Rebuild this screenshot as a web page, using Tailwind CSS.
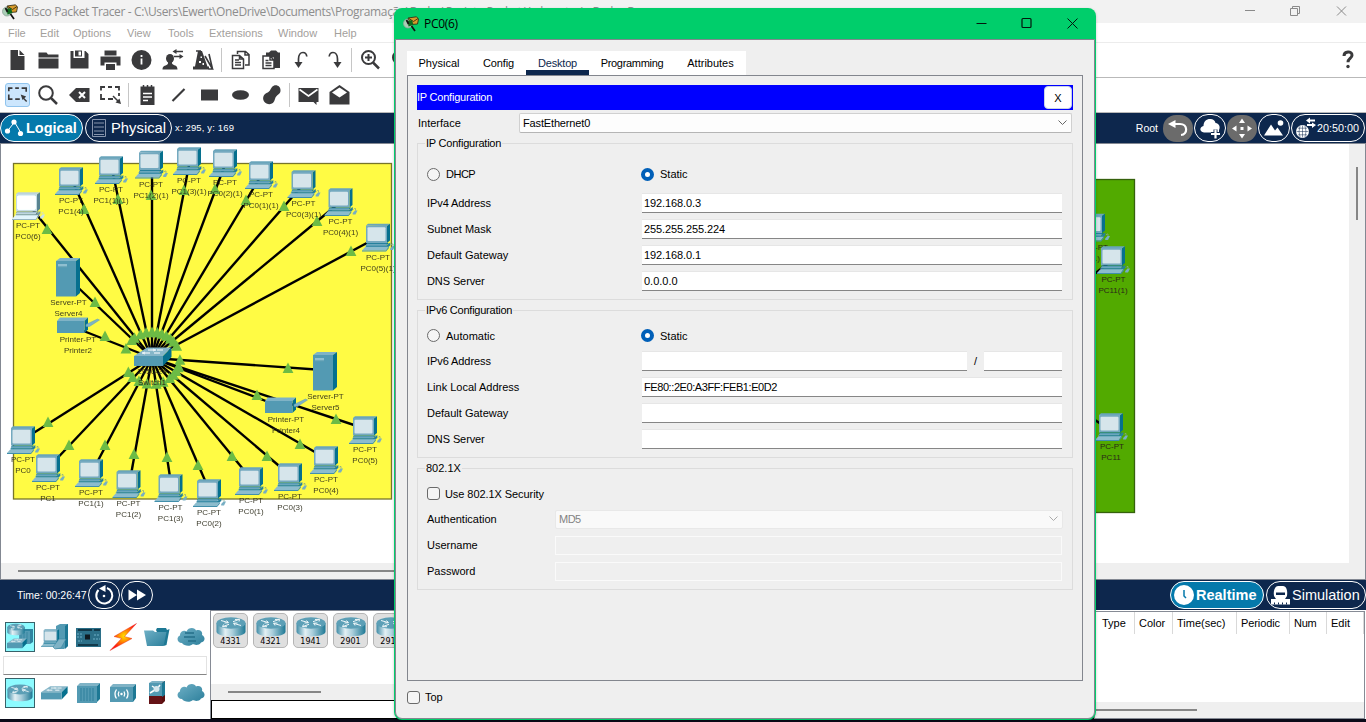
<!DOCTYPE html>
<html lang="en">
<head>
<meta charset="utf-8">
<title>Cisco Packet Tracer</title>
<script src="https://cdn.jsdelivr.net/npm/@tailwindcss/browser@4"></script>
</head>
<body class="w-[1366px] h-[722px] overflow-hidden bg-white font-['Liberation_Sans',sans-serif] text-[11px] leading-[14px] text-black">

<!-- Shared symbols -->
<svg width="0" height="0" class="absolute">
  <defs>
    <linearGradient id="gBody" x1="0" x2="1"><stop offset="0" stop-color="#3f8ca7"/><stop offset=".3" stop-color="#e3f0f4"/><stop offset=".55" stop-color="#a9cedb"/><stop offset="1" stop-color="#1d7894"/></linearGradient>
    <linearGradient id="gBlue" x1="0" x2="1" y1="0" y2="1"><stop offset="0" stop-color="#6fb0c6"/><stop offset="1" stop-color="#2c7f9b"/></linearGradient>
    <radialGradient id="gBolt" gradientUnits="userSpaceOnUse" cx="16" cy="14" r="13"><stop offset="0" stop-color="#ffe000"/><stop offset=".45" stop-color="#ff8a00"/><stop offset="1" stop-color="#ff1a10"/></radialGradient>
    <symbol id="pc" viewBox="0 0 34 28" overflow="visible">
      <path d="M4 2 6 .3H28L25 2.5Z" fill="#6aa5bb"/>
      <path d="M25 2.5 28 .3V17l-3 2.5Z" fill="#06708e"/>
      <path d="M4 2H25V19.5H4Z" fill="#74a9bf"/>
      <rect x="5.5" y="3.7" width="18" height="13.8" rx="1" fill="#d6e5eb"/>
      <path d="M5 19.5H27L25 21.3H4Z" fill="#0f7592"/>
      <path d="M5 20.3H25l-1 2.4H3Z" fill="#6ba7bd"/>
      <path d="M4 22.3H24L28.3 19V22L25 24.6H4Z" fill="#24809d"/>
      <path d="M3.4 23.2H26.5L23.8 27H0Z" fill="#8cbccd"/>
      <path d="M0 27 23.8 27 26.8 23V24.7L24 28H0Z" fill="#418fab"/>
      <path d="M28.2 25 30.5 22.6H33L31 26.6H28.2Z" fill="#77aec3"/>
      <path d="M29 21.5q1-1.500 2-1v2" fill="none" stroke="#86a989" stroke-width=".8"/>
    </symbol>
    <symbol id="server" viewBox="0 0 24 39" overflow="visible">
      <path d="M0 3 4 0H24L20 3Z" fill="#7fb3c6"/><path d="M20 3 24 0V35L20 38.500Z" fill="#06708e"/>
      <rect y="3" width="20" height="35.500" fill="#539ab3"/><rect x="2" y="6" width="9" height="3.500" fill="#8fbfd0"/><path d="M2 9h9" stroke="#2e7f9a" stroke-width=".7"/>
    </symbol>
    <symbol id="printer" viewBox="0 0 43 17" overflow="visible">
      <path d="M0 4 3 .5H31L27.500 4Z" fill="#7fb3c6"/><path d="M27.500 4 31 .5V12.500L27.500 16Z" fill="#06708e"/>
      <rect y="4" width="27.500" height="12" fill="#539ab3"/><path d="M29 7.500 40.500 2 42.500 3 32.500 9.500H29Z" fill="#7fb3c6" stroke="#5d9fb5" stroke-width=".5"/>
    </symbol>
    <symbol id="switch" viewBox="0 0 38 20" overflow="visible">
      <path d="M0 9 13 .5H37.500L29 9Z" fill="#86b6c8"/><path d="M29 9 37.500 .5V10L29 19Z" fill="#06708e"/><rect y="9" width="29" height="10" fill="#539ab3"/>
      <path d="M14 3h6m3 0h6M10 6h6m4 0h6" stroke="#fff" stroke-width="1.200"/><path d="M19 2l3 1-3 1M11 5 8 6l3 1" stroke="#fff" stroke-width=".8" fill="none"/>
    </symbol>
    <symbol id="router" viewBox="0 0 30 20">
      <path d="M.5 6V14.500C.5 21 29.500 21 29.500 14.500V6Z" fill="url(#gBody)"/><ellipse cx="15" cy="6" rx="14.500" ry="5.700" fill="#5c9fb6"/>
      <path d="M5 3.500 12 5.500M10.500 3.500 12.500 5.700 8.500 6M25 8.500 18 6.500M19 8.500 17.500 6.200 21.500 6M23 2.500 17 4.700M19 2.500 23.500 2.300 23 4.500M7 9.500 13 7.300M11 9.700 6.500 9.700 7.500 7.500" fill="none" stroke="#eef6f8" stroke-width="1"/>
    </symbol>
    <symbol id="cloud" viewBox="0 0 28 20">
      <path d="M5 16C0 16-1 10 3 8.500 3 4 8 3 9.500 4.500 11 0 18 0 19 3.500 23 2 26 5 25 8 29 10 28 15 24 15.500 22 19 17 18 16 17 13 20 7 19 5 16Z" fill="url(#gBlue)"/>
    </symbol>
    <symbol id="applogo" viewBox="0 0 16 16">
      <circle cx="5" cy="7.500" r="4.500" fill="#a9cdb5" stroke="#8fa59a" stroke-width=".8"/>
      <path d="M5 2 13.500 .8 15.500 3 14.500 8 8 8.500Z" fill="#d79b2b" stroke="#2b2410" stroke-width=".8"/><path d="M6 2.500 10.500 5.500 15 2.500" fill="none" stroke="#4b3910"/>
      <path d="M4.500 5 9 4 10.500 9 5.500 10.500Z" fill="#0e6a1c"/><path d="M3.500 4 5.500 8M8.500 10l3.500 5" stroke="#111" stroke-width="1.700"/>
    </symbol>
  </defs>
</svg>

<div class="flex flex-col w-[1366px] h-[722px]">
  <!-- Title bar -->
  <header class="h-[23px] shrink-0 bg-[#f2f2f2] flex items-center pl-[2px] overflow-hidden">
    <svg class="w-4 h-4 shrink-0"><use href="#applogo"/></svg>
    <div class="ml-[6px] w-[1216px] whitespace-nowrap font-['Open_Sans',sans-serif] text-[12px] leading-[16px] text-[#8d8d8d] tracking-[-0.37px]">Cisco Packet Tracer - C:\Users\Ewert\OneDrive\Documents\Programação\Redes\Projeto Packet \Laboratorio Redes Ra</div>
    <svg class="w-[110px] h-5 shrink-0 mb-[2px]" fill="none" stroke="#8a8a8a"><path d="M5 9.500h10M50.500 7.500h7v7h-7zM52.500 7.500v-2h7v7h-2M97 5.500l9 9m0-9l-9 9"/></svg>
  </header>
  <!-- Menu bar -->
  <nav class="h-[20px] shrink-0 flex gap-4 pl-2 pt-[3px] text-[#a3a09c] border-b border-[#ececec]">
    <span class="w-4">File</span><span class="w-[17px]">Edit</span><span class="w-[38px]">Options</span><span class="w-[25px]">View</span><span class="w-[25px]">Tools</span><span class="w-[53px]">Extensions</span><span class="w-[40px]">Window</span><span>Help</span>
  </nav>
  <!-- Main toolbar -->
  <div class="h-[35px] shrink-0 flex items-center border-b border-[#b9b9b9] pl-[1.5px] text-[#3a3a3c]">
    <svg class="w-[31px] h-6" viewBox="0 0 31 24" fill="currentColor"><path d="M8.500 2H16v6h6.500v14h-14zM17.500 2l5 5h-5z"/></svg>
    <svg class="w-[31px] h-6" viewBox="0 0 31 24" fill="currentColor"><path d="M5.500 4.500h8l1.500 2h10.500v3h-20zM5.500 10.500h20v10h-20z"/></svg>
    <svg class="w-[31px] h-6" viewBox="0 0 31 24" fill="currentColor"><path d="M6.500 3h3v7h11V3h1l3 3v14.500h-18z"/><path d="M11 2.500h7v6h-7z"/><path d="M14.500 3.500h2.500v4h-2.500z" fill="#fff"/></svg>
    <svg class="w-[31px] h-6" viewBox="0 0 31 24" fill="currentColor"><path d="M9.500 2.500h12v5h-12z"/><path d="M5.500 8.500h20v9h-4v-3h-12v3h-4z"/><path d="M11 16h9v6h-9z"/></svg>
    <svg class="w-[31px] h-6" viewBox="0 0 31 24"><circle cx="15.500" cy="12" r="10" fill="currentColor"/><path d="M15.500 10.500v6M15.500 7v2" stroke="#fff" stroke-width="1.800"/></svg>
    <svg class="w-[31px] h-6" viewBox="0 0 31 24" fill="currentColor"><ellipse cx="13" cy="10.500" rx="4" ry="4.500"/><path d="M5.500 21.500c0-5 4-3 5.500-6V12h4v3.500c1.500 2.500 5.500 1 5.500 6z"/><path d="M19 3.500h7M17 8.500h7" stroke="currentColor" stroke-width="1.500"/><path d="M19.500 1v5l-4-2.500zM22.500 6v5l4-2.500z"/></svg>
    <svg class="w-[31px] h-6" viewBox="0 0 31 24" fill="currentColor"><path d="M10 3h4l5.500 15.500H7zM5 18.500h16v3H5z"/><path d="M8 3h5" stroke="currentColor" stroke-width="1.500"/><path d="M17 8l7.500 13h-4M21 6l3.500 15" stroke="currentColor" stroke-width="1.600" fill="none"/><path d="M11 13h2v2h-2zM14.500 15h1.500v2h-1.500zM12.500 8.500h1.500v1.500h-1.500z" fill="#fff"/></svg>
    <span class="w-[6px] h-6 flex justify-center"><i class="w-px h-full bg-[#c6c6c6]"></i></span>
    <svg class="w-[31px] h-6" viewBox="0 0 31 24" fill="none" stroke="currentColor" stroke-width="1.500"><path d="M12.500 6V3.500h8l3.500 3V17h-4M7.500 7.500h7l4 3.500v9.500h-11zM14.500 7.500V11h4M10 12h4m-4 2.500h6M10 17h6M20 4v3h4"/></svg>
    <svg class="w-[31px] h-6" viewBox="0 0 31 24"><path d="M10 4.500h3L15 2.500h5L22 4.500h2V20h-6V9.500H10z" fill="currentColor"/><path d="M7 8h7l4 4v8.500H7zM14 8v4h4M9.500 12.500h3m-3 2.500h6m-6 2.500h6" fill="#fff" stroke="currentColor" stroke-width="1.500"/></svg>
    <svg class="w-[31px] h-6" viewBox="0 0 31 24"><path d="M11.500 15V11c0-4 2-6.500 4.500-6.500 2 0 3.500 1.500 3.800 4" fill="none" stroke="currentColor" stroke-width="1.700"/><path d="M7.500 14h8L11.500 20z" fill="currentColor"/></svg>
    <svg class="w-[31px] h-6" viewBox="0 0 31 24"><path d="M19.500 15V11c0-4-2-6.500-4.500-6.500-2 0-3.500 1.500-3.800 4" fill="none" stroke="currentColor" stroke-width="1.700"/><path d="M15.500 14h8L19.500 20z" fill="currentColor"/></svg>
    <span class="w-[6px] h-6 flex justify-center"><i class="w-px h-full bg-[#c6c6c6]"></i></span>
    <svg class="w-[31px] h-6" viewBox="0 0 31 24" fill="none" stroke="currentColor" stroke-width="2"><circle cx="13.500" cy="9.500" r="6.500"/><path d="M10 9.500h7M13.500 6v7"/><path d="M18 14.500l6 6" stroke-width="2.500"/></svg>
    <svg class="w-[31px] h-6" viewBox="0 0 31 24" fill="none" stroke="currentColor" stroke-width="2"><circle cx="13.500" cy="9.500" r="6.500"/><path d="M10 9.500h7"/><path d="M18 14.500l6 6" stroke-width="2.500"/></svg>
    <svg class="w-5 h-6 ml-auto mr-2" viewBox="0 0 20 24"><path d="M6 8c0-5 8-5.500 8-.8 0 3.300-4 3.300-4 7" fill="none" stroke="currentColor" stroke-width="3"/><circle cx="10" cy="18.500" r="1.700" fill="currentColor"/></svg>
  </div>
  <!-- Drawing toolbar -->
  <div class="h-[35px] shrink-0 flex items-center border-b border-[#b9b9b9] pl-[1.5px] text-[#3a3a3c]">
    <span class="w-[31px] flex justify-center"><svg class="w-[25px] h-6 rounded-[3px] bg-[#cce6fd] border border-[#90c4ee]" viewBox="0 0 25 24" fill="none" stroke="currentColor" stroke-width="1.800"><path d="M3 8V4.500h4m3 0h4m3 0h5v4M3 11.500v5h4m3 0h5"/><path d="M22.500 19l-4-4" stroke-width="1.500"/><path d="M16 11.500l6 2-4 4z" fill="currentColor" stroke="none"/></svg></span>
    <svg class="w-[31px] h-6" viewBox="0 0 31 24" fill="none" stroke="currentColor" stroke-width="2"><circle cx="13" cy="10" r="6.800"/><path d="M17.500 14.500l6.500 6.500" stroke-width="2.500"/></svg>
    <svg class="w-[31px] h-6" viewBox="0 0 31 24"><path d="M5 12l7-7h13.500v14H12z" fill="currentColor"/><path d="M15 9l6 6m0-6l-6 6" stroke="#fff" stroke-width="2"/></svg>
    <svg class="w-[31px] h-6" viewBox="0 0 31 24" fill="none" stroke="currentColor" stroke-width="1.800"><path d="M6 7.500V4h4m3 0h4m3 0h4v3.500M6 11v5h4m3 0h5M24 10v3"/><path d="M18 13l6 6" stroke-width="1.500"/><path d="M26 21l-5.500-1.500 4-4z" fill="currentColor" stroke="none"/></svg>
    <span class="w-[6px] h-6 flex justify-center"><i class="w-px h-full bg-[#c6c6c6]"></i></span>
    <svg class="w-[31px] h-6" viewBox="0 0 31 24"><path d="M8.500 3.500h14V22h-14z" fill="currentColor"/><path d="M11.500 2v4m4-4v4m4-4v4" stroke="currentColor" stroke-width="1.500"/><path d="M11 10.500h9M11 14h9M11 17.500h5" stroke="#fff" stroke-width="1.500"/></svg>
    <svg class="w-[31px] h-6" viewBox="0 0 31 24"><path d="M9.500 18L21.500 6" stroke="currentColor" stroke-width="2.200"/></svg>
    <svg class="w-[31px] h-6" viewBox="0 0 31 24"><path d="M7 6.500h17v11H7z" fill="currentColor"/></svg>
    <svg class="w-[31px] h-6" viewBox="0 0 31 24"><ellipse cx="15.500" cy="12" rx="8.500" ry="4.800" fill="currentColor"/></svg>
    <svg class="w-[31px] h-6" viewBox="0 0 31 24"><path d="M16 4c3-3.500 9-1.500 8.500 4-.4 4-4.500 3.500-5.500 8-1 5-5 6-8.500 4.500C6 18.500 6 12 10.500 10 14.500 8.500 14 6.500 16 4z" fill="currentColor"/></svg>
    <span class="w-[6px] h-6 flex justify-center"><i class="w-px h-full bg-[#c6c6c6]"></i></span>
    <svg class="w-[31px] h-6" viewBox="0 0 31 24"><path d="M5.500 5h20v14h-2v3l-3-3h-15z" fill="currentColor"/><path d="M6.500 6.500l9 6.500 9-6.500" fill="none" stroke="#fff" stroke-width="1.600"/></svg>
    <svg class="w-[31px] h-6" viewBox="0 0 31 24"><path d="M5.500 9l10-7 10 7v12.500h-20z" fill="currentColor"/><path d="M8 9.500l7.500-5 7.500 5-7.500 5z" fill="#fff"/></svg>
  </div>
  <!-- Workspace bar -->
  <div class="h-[30px] shrink-0 bg-[#0d274d] flex items-center text-white">
    <div class="w-[83px] h-7 rounded-full border border-white bg-[#0479ab] flex items-center pl-[3px] text-[14.5px] font-bold">
      <svg class="w-[22px] h-5" viewBox="0 0 22 20" fill="#fff"><path d="M3.500 13L10.500 4 17 15" stroke="#fff" fill="none"/><circle cx="3.500" cy="13" r="2.600"/><circle cx="10" cy="4" r="2.600"/><circle cx="16.500" cy="15.500" r="2.600"/></svg>Logical</div>
    <div class="ml-[2px] w-[87px] h-7 rounded-full border border-white flex items-center pl-[6px] text-[14.8px]">
      <svg class="w-[15px] h-[18px] mr-[4px]" fill="none" stroke="#8795ad"><path d="M.5.500h13v17H.5zM2 4h10M2 8h10M2 12h10M2 15.500h10"/></svg>Physical</div>
    <span class="ml-[3px] text-[9.5px] tracking-[0.15px]">x: 295, y: 169</span>
    <span class="ml-auto mr-[5px] text-[10.5px]">Root</span>
    <svg class="w-[30px] h-[27px] mr-px" viewBox="0 0 30 27"><rect width="30" height="27" rx="13" fill="#6b6b6b"/><path d="M9 9h8c8 0 8 10.500 1 11" fill="none" stroke="#fff" stroke-width="2.200"/><path d="M5 9l7.500-4v8z" fill="#fff"/></svg>
    <svg class="w-8 h-7 mr-px" viewBox="0 0 32 28"><rect x=".5" y=".5" width="31" height="27" rx="13.500" fill="none" stroke="#fff"/><path d="M10 18.500c-5-.5-4.500-6-.5-6.500C9.500 7 13 4.500 17 5c3 .500 4 2 4.500 4 4 .500 5 4.500 3.500 7v2.500z" fill="#fff"/><path d="M21.500 15.500v9m-4.500-4.500h9" stroke="#0d274d" stroke-width="4"/><path d="M21.500 15.500v9m-4.500-4.500h9" stroke="#fff" stroke-width="2.200"/></svg>
    <svg class="w-[30px] h-[27px] mr-px" viewBox="0 0 30 27" fill="#fff"><rect width="30" height="27" rx="13" fill="#6b6b6b"/><path d="M15 3.500l3 4.500h-6zM15 23.500l3-4.500h-6zM5 13.500l4.500-3v6zM25 13.500l-4.500-3v6z"/><path d="M13.500 12h3v3h-3z"/></svg>
    <svg class="w-8 h-7 mr-px" viewBox="0 0 32 28" fill="#fff"><rect x=".5" y=".5" width="31" height="27" rx="13.500" fill="none" stroke="#fff"/><circle cx="22.500" cy="9" r="2.800"/><path d="M6 21.500l7-11 4 6 2.500-3 5.500 8z"/></svg>
    <div class="w-[74px] h-7 rounded-full border border-white flex items-center pl-[3px] mr-px text-[10.8px]">
      <svg class="w-[22px] h-6" viewBox="0 0 22 24"><circle cx="7.500" cy="15.500" r="6.500" fill="#fff"/><path d="M1.500 15.500h12M7.500 9.500v12M3 12.200h9M3 18.800h9M5 10q-2 5.500 0 11M10 10q2 5.500 0 11" fill="none" stroke="#0d274d" stroke-width=".5"/><path d="M13 4.500h7M12 9h6" stroke="#fff" stroke-width="1.800"/><path d="M15 1.500v6l-4-3zM17 6.500v5.500l4-3z" fill="#fff"/></svg>20:50:00</div>
  </div>
  <!-- Topology canvas -->
  <svg id="canvas" class="w-[1366px] h-[437px] shrink-0 block" viewBox="0 143 1366 437" font-size="8">
    <rect x="0" y="143" width="1366" height="437" fill="#838892"/>
    <rect x="1" y="144" width="1364" height="435" fill="#fff"/>
    <rect x="1" y="563" width="1364" height="16" fill="#efefef"/><rect x="1349" y="144" width="16" height="435" fill="#efefef"/>
    <rect x="18" y="570" width="700" height="2" fill="#868686"/><rect x="1356" y="167" width="2" height="53" fill="#868686"/>
    <rect x="13.500" y="163.500" width="378" height="335.500" fill="#fffb44" stroke="#77752a" stroke-width="1.300"/>
    <rect x="900" y="179.500" width="234.500" height="333" fill="#52aa00" stroke="#35610c" stroke-width="1.300"/>
  </svg>
  <!-- Time bar -->
  <div class="h-[30px] shrink-0 bg-[#0d274d] flex items-center text-white pl-[17px]">
    <span class="w-[71px] text-[10.5px]">Time: 00:26:47</span>
    <svg class="w-8 h-7 mr-px" viewBox="0 0 32 28" fill="none" stroke="#fff"><rect x=".5" y=".5" width="31" height="27" rx="13.500"/><path d="M10.500 9a8 8 0 1 0 8.500-2" stroke-width="2"/><path d="M11 7.500L17.500 4v7z" fill="#fff" stroke="none"/><circle cx="16" cy="15" r="1.300" fill="#fff" stroke="none"/></svg>
    <svg class="w-8 h-7" viewBox="0 0 32 28"><rect x=".5" y=".5" width="31" height="27" rx="13.500" fill="none" stroke="#fff"/><path d="M7.500 8.500l8.500 5.500-8.500 5.500zM16 8.500l9 5.500-9 5.500z" fill="#fff"/></svg>
    <div class="ml-auto w-[94px] h-7 rounded-full border border-white bg-[#0479ab] flex items-center pl-[2px] text-[14.5px] font-bold">
      <svg class="w-[22px] h-[22px] mr-px" viewBox="0 0 22 22"><circle cx="11" cy="11" r="10" fill="#fff"/><path d="M11 6v6l2 2" fill="none" stroke="#0479ab" stroke-width="1.500"/></svg>Realtime</div>
    <div class="ml-[2px] w-[100px] h-7 rounded-full border border-white flex items-center pl-[3px] text-[14.5px]">
      <svg class="w-[22px] h-[22px]" viewBox="0 0 22 22" fill="#fff"><path d="M4 12C3 5 6 2 8 2h5c3 0 5 4 4 10l-2 3H6zM1 15h19v5.500H1z"/><path d="M6 8.500h9v2.500H6z" fill="#0d274d"/><path d="M4.500 20.500v-2M8.500 20.500v-2M12.500 20.500v-2M16.500 20.500v-2" stroke="#0d274d" stroke-width="1"/></svg>Simulation</div>
  </div>
  <!-- Device palette -->
  <div class="h-[109px] shrink-0 flex">
    <div class="w-[210px] flex flex-col pt-3">
      <div class="flex items-center pl-[5px] h-[30px]">
        <svg class="w-[30px] h-[30px] bg-[#8dfbff] border border-[#38626a] mr-[5px]" viewBox="0 0 28 28"><path d="M13 8l3-2h11v13l-3 2H13z" fill="#2f84a0"/><path d="M13 8h11v13H13z" fill="#539ab3"/><path d="M15 9v10m3-10v10m3-10v10" stroke="#3b86a0"/><use href="#router" x="1" y="0" width="18" height="13"/><use href="#switch" x="1" y="15" width="20" height="11"/></svg>
        <svg class="w-[30px] h-[30px] mr-1" viewBox="0 0 30 30"><path d="M16 4l4-2h8v22l-4 3h-8z" fill="#539ab3"/><path d="M25 4l3-2v22l-3 3z" fill="#1c7693"/><use href="#pc" x="1" y="7" width="22" height="18"/><path d="M13 25l6-8h7l-5 9-6 1z" fill="#7fb3c6" stroke="#3a86a1" stroke-width=".6"/></svg>
        <svg class="w-[30px] h-[30px] mr-1" viewBox="0 0 30 30"><rect x="2" y="6" width="25" height="19" fill="#2b6f88"/><path d="M4 8h14M4 23h20M20 8h6" stroke="#12394a" stroke-width="2"/><rect x="11" y="12.500" width="5" height="5" fill="#0f1b22"/><path d="M3 12h6M3 15h5M20 13h6M19 17h7M4 19h4" stroke="#6fb0c6" stroke-dasharray="2 1"/></svg>
        <svg class="w-[30px] h-[30px] mr-1" viewBox="0 0 30 30"><path d="M28.500 1.500L6 14.500l7.500 2L2 28.500 24 16.500l-7.500-2z" fill="url(#gBolt)" stroke="#e2221a" stroke-width=".4"/></svg>
        <svg class="w-[30px] h-[30px] mr-1" viewBox="0 0 30 30"><path d="M14 8l1-2h9l1 2 2.500-1-3 16-3 1z" fill="#1d7894"/><path d="M2 8.500h9l2 1.500h11.500l-3 14H5z" fill="url(#gBlue)"/></svg>
        <svg class="w-[30px] h-[30px]" viewBox="0 0 30 30"><use href="#cloud" x="1" y="5" width="28" height="20"/><path d="M9 11h9M8 15h11M12 19h8" stroke="#256f89" stroke-width="1.300"/></svg>
      </div>
      <div class="mt-1 ml-[3px] w-[204px] h-[19px] border border-[#e2e2e2] border-b-[#868686]"></div>
      <div class="flex items-center pl-[5px] h-[30px] mt-[3px]">
        <svg class="w-[30px] h-[30px] bg-[#8dfbff] border border-[#38626a] mr-[5px]" viewBox="0 0 28 28"><use href="#router" x="1" y="4" width="26" height="20"/></svg>
        <svg class="w-[30px] h-[30px] mr-1" viewBox="0 0 30 30"><use href="#switch" x="1" y="7" width="27" height="16"/></svg>
        <svg class="w-[30px] h-[30px] mr-1" viewBox="0 0 30 30"><path d="M3 8l3-3h20l-3 3z" fill="#7fb3c6"/><path d="M23 8l3-3v16l-3 3z" fill="#1d7894"/><path d="M3 8h20v17H3z" fill="#539ab3"/><path d="M7 10v13m3-13v13m3-13v13m3-13v13m3-13v13" stroke="#2f7f9b"/></svg>
        <svg class="w-[30px] h-[30px] mr-1" viewBox="0 0 30 30"><path d="M2 9l3-3h23l-3 3z" fill="#7fb3c6"/><path d="M25 9l3-3v14l-3 4z" fill="#1d7894"/><path d="M2 9h23v15H2z" fill="#539ab3"/><path d="M8.500 11.500q-3 4.500 0 9M11 13.500q-1.500 2.500 0 5M18.500 11.500q3 4.500 0 9M16 13.500q1.500 2.500 0 5" fill="none" stroke="#fff" stroke-width="1.300"/><circle cx="13.500" cy="16" r="1.200" fill="#fff"/></svg>
        <svg class="w-[30px] h-[30px] mr-1" viewBox="0 0 30 30"><path d="M7 5l3-2h13l-3 2z" fill="#7fb3c6"/><path d="M20 5l3-2v20l-3 3z" fill="#5a0d0d"/><path d="M20 5l3-2v14l-3 2z" fill="#1d7894"/><path d="M7 5h13v13H7z" fill="#539ab3"/><path d="M7 18h13v8H7z" fill="#651216"/><path d="M10 8l3 2M18 7l-1.500 2M8 15l4-2.500" stroke="#fff" stroke-width="1.500"/><circle cx="14.500" cy="11" r="3" fill="#d7e8ee"/></svg>
        <svg class="w-[30px] h-[30px]" viewBox="0 0 30 30"><use href="#cloud" x="1" y="5" width="28" height="20"/></svg>
      </div>
    </div>
    <div class="w-[884px] flex flex-col border-l border-[#868b95]">
      <div class="h-[90px] border-t border-[#868b95] flex flex-col justify-between">
        <div id="models" class="flex gap-[5px] pl-[2px] pt-[2px]"></div>
        <div class="h-4 bg-[#efefef] pl-[17px] pt-[7px]"><div class="w-[93px] h-[2px] bg-[#868686]"></div></div>
      </div>
      <div class="h-[19px] border border-black border-t-[1.5px]"></div>
    </div>
    <!-- PDU list -->
    <div class="flex-1 flex flex-col justify-between border border-[#868b95] mt-px mr-px">
      <div class="flex h-[22px] pl-[2px] leading-[22px]">
        <span class="w-[37px] pl-[5px]">Type</span><span class="w-[38px] pl-1 border-l border-[#d9d9d9]">Color</span><span class="w-[64px] pl-1 border-l border-[#d9d9d9]">Time(sec)</span><span class="w-[53px] pl-1 border-l border-[#d9d9d9] tracking-[-0.1px]">Periodic</span><span class="w-[37px] pl-1 border-l border-[#d9d9d9] tracking-[-0.3px]">Num</span><span class="w-[38px] pl-1 border-x border-[#d9d9d9]">Edit</span>
      </div>
      <div class="h-4 bg-[#efefef] pt-[7px]"><div class="w-[102px] h-[2px] bg-[#868686]"></div></div>
    </div>
  </div>
  <div class="h-[3px] shrink-0 bg-[#0a0a18]"></div>
</div>

<!-- PC window -->
<section class="absolute left-[394px] top-[8px] w-[702px] h-[712px] rounded-[8px] bg-[#00ce6b] p-px pt-0 flex flex-col overflow-hidden shadow-[0_1px_3px_rgba(0,0,0,0.2)]">
  <div class="h-[31px] shrink-0 flex items-center pl-[8px]">
    <svg class="w-4 h-4"><use href="#applogo"/></svg>
    <span class="ml-[5px] font-['Open_Sans',sans-serif] text-[12px] tracking-[-0.3px]">PC0(6)</span>
    <svg class="ml-auto mr-[17px] w-[102px] h-5 mb-px" fill="none" stroke="#04160c"><path d="M.5 10.500h10M91.500 5.500l10 10m0-10l-10 10"/><rect x="46" y="5.500" width="9" height="9" rx="1" stroke-width="1.200"/></svg>
  </div>
  <div class="flex-1 bg-[#efefef] border border-[#83868e] rounded-b-[7px] px-[11px] pt-[11px] flex flex-col">
    <div class="flex h-6 w-[339px] bg-white text-center leading-6">
      <span class="w-[64px]">Physical</span><span class="w-[55px] tracking-[-0.1px]">Config</span><span class="w-[63px] text-[#0d274d] border-b-[5px] border-[#0d274d] tracking-[-0.2px]">Desktop</span><span class="w-[86px] tracking-[-0.3px]">Programming</span><span class="w-[71px]">Attributes</span>
    </div>
    <div class="h-[606px] w-[676px] border border-[#83868e] px-[9px] pt-[9px]">
      <div class="h-[25px] bg-[#0000ff] text-white flex items-center justify-between pr-px"><span class="tracking-[-0.22px] mb-px">IP Configuration</span><button class="w-7 h-[23px] bg-white text-black rounded-[4px] border border-[#c9d3e8]">X</button></div>
      <div class="flex items-center mt-[3px] pl-px h-5">
        <span class="w-[101px]">Interface</span>
        <div class="w-[553px] h-5 bg-[#fdfdfd] border border-[#d0d0d0] border-b-[#b5b5b5] rounded-[2px] flex items-center justify-between pl-[3px] pr-1"><span class="tracking-[-0.15px]">FastEthernet0</span><svg class="w-[9px] h-[6px]" fill="none" stroke="#666"><path d="M.5.500l4 4 4-4"/></svg></div>
      </div>

      <fieldset class="mt-[3px] border border-[#dcdcdc] pl-[9px] pb-[5px] h-[164px]">
        <legend class="ml-[-2px] px-[1px] h-[14px] tracking-[-0.22px]">IP Configuration</legend>
        <div class="flex items-center h-[26px] mt-[11px] mb-[3px]">
          <i class="w-[13px] h-[13px] rounded-full border border-[#6a6a6a] bg-[#f5f5f5]"></i><span class="ml-[6px] w-[195px] tracking-[-0.5px]">DHCP</span>
          <i class="w-[13px] h-[13px] rounded-full border-4 border-[#005fb8] bg-white"></i><span class="ml-[6px]">Static</span>
        </div>
        <div class="flex items-center h-[26px]"><span class="w-[215px] tracking-[-0.08px]">IPv4 Address</span><div class="w-[420px] h-5 bg-white border-b border-[#868686] border-t border-t-[#e6e6e6] pl-[2px] leading-[19px] tracking-[-0.1px]">192.168.0.3</div></div>
        <div class="flex items-center h-[26px]"><span class="w-[215px]">Subnet Mask</span><div class="w-[420px] h-5 bg-white border-b border-[#868686] border-t border-t-[#e6e6e6] pl-[2px] leading-[19px] tracking-[-0.1px]">255.255.255.224</div></div>
        <div class="flex items-center h-[26px]"><span class="w-[215px]">Default Gateway</span><div class="w-[420px] h-5 bg-white border-b border-[#868686] border-t border-t-[#e6e6e6] pl-[2px] leading-[19px] tracking-[-0.1px]">192.168.0.1</div></div>
        <div class="flex items-center h-[26px]"><span class="w-[215px] tracking-[-0.1px]">DNS Server</span><div class="w-[420px] h-5 bg-white border-b border-[#868686] border-t border-t-[#e6e6e6] pl-[2px] leading-[19px]">0.0.0.0</div></div>
      </fieldset>

      <fieldset class="mt-[3px] border border-[#dcdcdc] pl-[9px] pb-[5px] h-[155px]">
        <legend class="ml-[-2px] px-[1px] h-[14px] tracking-[-0.24px]">IPv6 Configuration</legend>
        <div class="flex items-center h-[25px] mt-[6px]">
          <i class="w-[13px] h-[13px] rounded-full border border-[#6a6a6a] bg-[#f5f5f5]"></i><span class="ml-[6px] w-[195px]">Automatic</span>
          <i class="w-[13px] h-[13px] rounded-full border-4 border-[#005fb8] bg-white"></i><span class="ml-[6px]">Static</span>
        </div>
        <div class="flex items-center h-[26px]"><span class="w-[215px] tracking-[-0.08px]">IPv6 Address</span><div class="w-[325px] h-5 bg-white border-b border-[#868686] border-t border-t-[#e6e6e6]"></div><span class="w-[17px] text-center">/</span><div class="w-[78px] h-5 bg-white border-b border-[#868686] border-t border-t-[#e6e6e6]"></div></div>
        <div class="flex items-center h-[26px]"><span class="w-[215px]">Link Local Address</span><div class="w-[420px] h-5 bg-white border-b border-[#868686] border-t border-t-[#e6e6e6] pl-[2px] leading-[19px] tracking-[-0.42px]">FE80::2E0:A3FF:FEB1:E0D2</div></div>
        <div class="flex items-center h-[26px]"><span class="w-[215px]">Default Gateway</span><div class="w-[420px] h-5 bg-white border-b border-[#868686] border-t border-t-[#e6e6e6]"></div></div>
        <div class="flex items-center h-[26px]"><span class="w-[215px] tracking-[-0.1px]">DNS Server</span><div class="w-[420px] h-5 bg-white border-b border-[#868686] border-t border-t-[#e6e6e6]"></div></div>
      </fieldset>

      <fieldset class="mt-[3px] border border-[#dcdcdc] pl-[9px] pb-[5px] h-[129px]">
        <legend class="ml-[-2px] px-[1px] h-[14px]">802.1X</legend>
        <div class="flex items-center h-[25px] mt-[6px]"><i class="w-[13px] h-[13px] rounded-[3px] border border-[#6a6a6a] bg-[#f5f5f5]"></i><span class="ml-[5px] tracking-[-0.07px]">Use 802.1X Security</span></div>
        <div class="flex items-center h-[26px]"><span class="w-[128px]">Authentication</span><div class="w-[508px] h-[19px] bg-[#f9f9f9] border border-[#e8e8e8] rounded-[2px] flex items-center justify-between pl-[3px] pr-1 text-[#838383]"><span class="tracking-[-0.5px]">MD5</span><svg class="w-[9px] h-[6px]" fill="none" stroke="#aaa"><path d="M.5.500l4 4 4-4"/></svg></div></div>
        <div class="flex items-center h-[26px]"><span class="w-[128px]">Username</span><div class="w-[507px] h-[19px] border border-[#fafafa]"></div></div>
        <div class="flex items-center h-[26px]"><span class="w-[128px]">Password</span><div class="w-[507px] h-[19px] border border-[#fafafa]"></div></div>
      </fieldset>
    </div>
    <div class="flex items-center mt-[9px]"><i class="w-[13px] h-[13px] rounded-[3px] border border-[#6a6a6a] bg-[#f5f5f5]"></i><span class="ml-[5px]">Top</span></div>
  </div>
</section>

<script>
  const hub = [152, 358];
  // kind, left, top, name, link-light x, link-light y
  const nodes = [
    ['pc',12,192,'PC0(6)',47,229],['pc',55,167,'PC1(4)',84,209],['pc',95,156,'PC1(1)(1)',118,199],
    ['pc',135,150.5,'PC1(2)(1)',151,195],['pc',173,147,'PC1(3)(1)',184,190],['pc',209,149,'PC0(2)(1)',215,189],
    ['pc',245,161,'PC0(1)(1)',246,200],['pc',287.5,170,'PC0(3)(1)',284,206],['pc',324.5,188,'PC0(4)(1)',317,221],
    ['pc',362,223.5,'PC0(5)(1)',351,251],['server',56,258,'Server4',95,302],['printer',57,317,'Printer2',105,336],
    ['server',313,352,'Server5',288,368],['printer',265,397,'Printer4',257,395],['pc',349,416,'PC0(5)',336,419],
    ['pc',310,446,'PC0(4)',300,444],['pc',274,463,'PC0(3)',267,456],['pc',235,467,'PC0(1)',232,456],
    ['pc',193,479,'PC0(2)',198,465],['pc',7,426,'PC0',48,422],['pc',32,454,'PC1',69,445],
    ['pc',75,459,'PC1(1)',105,445],['pc',112.5,470,'PC1(2)',134,454],['pc',154.5,474,'PC1(3)',167,457]
  ];
  const spec = {
    pc:      {w:34,h:28,cx:17,cy:13,lx:16,ly:36,type:'PC-PT'},
    server:  {w:24,h:39,cx:10,cy:18,lx:12.5,ly:47,type:'Server-PT'},
    printer: {w:43,h:17,cx:14,cy:9,lx:21,ly:25,type:'Printer-PT'}
  };
  const tri = (x, y) => `<path d="M${x} ${y-5.5}L${x+5.4} ${y+5}H${x-5.4}Z" fill="#6cbb45"/>`;
  const icon = (k, x, y) => `<use href="#${k}" x="${x}" y="${y}" width="${spec[k].w}" height="${spec[k].h}"/>`;
  const label = (x, y, t) => `<text x="${x}" y="${y}" text-anchor="middle" fill="#2a2918">${t}</text>`;
  let lines = '', icons = '', labels = '', lights = '';
  for (const [k, x, y, name, tx, ty] of nodes) {
    const s = spec[k], ex = x + s.cx, ey = y + s.cy, d = Math.hypot(ex - hub[0], ey - hub[1]);
    lines += `<path d="M${hub}L${ex} ${ey}" stroke="#000" stroke-width="2.4"/>`;
    // the selected device is drawn paler
    icons += name === 'PC0(6)' ? `<g style="filter:saturate(.3) brightness(1.35)">${icon(k, x, y)}</g>` : icon(k, x, y);
    const ly = k === 'pc' ? y + 36 : y + s.ly;
    labels += label(x + s.lx, ly, s.type) + label(x + s.lx, ly + 11, name);
    lights += tri(tx, ty) + tri(hub[0] + (ex - hub[0]) / d * 28, hub[1] + (ey - hub[1]) / d * 26);
  }
  const extra = '<path d="M1080 285L1110 262M1080 410L1110 430" stroke="#000" stroke-width="2.4"/>' +
    icon('pc',1077,213.5) + label(1096,250,'PC-PT') + label(1085,260.5,'PC10(1)') +
    icon('pc',1097,246) + label(1113.5,282,'PC-PT') + label(1113,293,'PC11(1)') +
    icon('pc',1095,413) + label(1112,449,'PC-PT') + label(1111,460,'PC11');
  const sw = '<use href="#switch" x="134" y="347" width="38" height="20"/>';
  document.getElementById('canvas').insertAdjacentHTML('beforeend',
    `<g>${lines}${icons}${lights}<g opacity=".9">${labels}</g>${label(152,374,'2950-24')}${label(152,385,'Switch1')}${sw}${extra}</g>`);
  document.getElementById('models').innerHTML = ['4331','4321','1941','2901','2911'].map(m =>
    `<div class="w-[35px] h-[35px] rounded-[5px] border border-[#b5b5b5] bg-[#dfdfdf] flex flex-col items-center pt-[3px] font-['DejaVu_Sans'] text-[8px] leading-[10px]"><svg class="w-[30px] h-[20px]"><use href="#router"/></svg>${m}</div>`).join('');
</script>
</body>
</html>
